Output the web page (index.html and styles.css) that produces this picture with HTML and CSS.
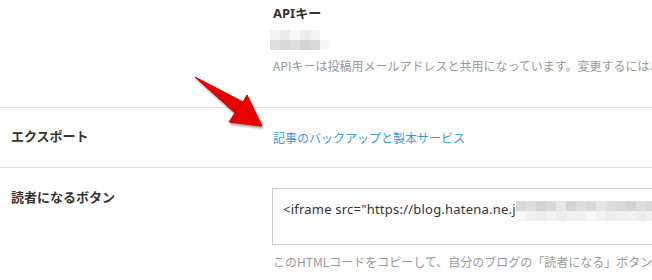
FILE: index.html
```html
<!DOCTYPE html>
<html lang="ja">

<head>
  <meta charset="UTF-8">
  <meta name="viewport" content="width=device-width, initial-scale=1.0">
  <title>詳細設定</title>
  <link rel="stylesheet" href="styles.css">
</head>

<body>
  <div class="settings">
    <div class="settings__row settings__row--api">
      <div class="settings__label"></div>
      <div class="settings__body">
        <h4 class="settings__title">APIキー</h4>
        <div class="mosaic mosaic--key">
          <span class="m1"></span><span class="m2"></span><span class="m0"></span><span class="m2"></span><span class="m1"></span><span class="blank"></span>
          <span class="m4"></span><span class="m5"></span><span class="m4"></span><span class="m6"></span><span class="m5"></span><span class="m0"></span>
        </div>
        <p class="settings__note">APIキーは投稿用メールアドレスと共用になっています。変更するには、</p>
      </div>
    </div>

    <div class="settings__row settings__row--export">
      <div class="settings__label">エクスポート</div>
      <div class="settings__body">
        <a class="settings__link" href="#">記事のバックアップと製本サービス</a>
      </div>
    </div>

    <div class="settings__row settings__row--button">
      <div class="settings__label">読者になるボタン</div>
      <div class="settings__body">
        <div class="code-box">
          <span class="code-box__text">&lt;iframe src="https://blog.hatena.ne.j</span><span class="mosaic mosaic--code">
            <span class="m5"></span><span class="m4"></span><span class="m6"></span><span class="m5"></span><span class="m3"></span><span class="m6"></span><span class="m4"></span><span class="m5"></span><span class="m3"></span><span class="m4"></span><span class="m5"></span><span class="m6"></span><span class="m4"></span><span class="m5"></span><span class="m6"></span>
            <span class="m0"></span><span class="m1"></span><span class="m2"></span><span class="m1"></span><span class="m2"></span><span class="m1"></span><span class="m1"></span><span class="m0"></span><span class="m1"></span><span class="m2"></span><span class="m1"></span><span class="m1"></span><span class="m2"></span><span class="m1"></span><span class="m0"></span>
          </span>
        </div>
        <p class="settings__note settings__note--code">このHTMLコードをコピーして、自分のブログの「読者になる」ボタンを</p>
      </div>
    </div>
  </div>

  <!-- 注目ポイントの矢印 -->
  <svg class="pointer" width="80" height="60" viewBox="190 72 80 60">
    <path d="M195 77 L243 102 L247 95 L262 126 L229 122 L235 113 Z" fill="#e60000" stroke="#d00000" stroke-width="1" stroke-linejoin="round"/>
  </svg>
</body>

</html>
```

FILE: styles.css
```css
body {
  margin: 0;
  font-family: "Noto Sans", "Noto Sans CJK JP", sans-serif;
  color: #333;
  background: #fff;
}

.settings {
  width: 100%;
  overflow: hidden;
}

.settings__row {
  display: flex;
  border-bottom: 1px solid #dedede;
}

.settings__label {
  width: 262px;
  flex-shrink: 0;
  padding-left: 11px;
  font-family: "Noto Sans CJK JP", sans-serif;
  font-size: 13px;
  font-weight: bold;
  line-height: 20px;
}

.settings__body {
  flex: 1;
  min-width: 0;
  white-space: nowrap;
}

.settings__row--api .settings__body {
  padding: 3px 0 32px;
}

.settings__title {
  margin: 0;
  font-size: 13px;
  font-weight: bold;
  line-height: 20px;
  font-family: "Noto Sans", "Noto Sans CJK JP", sans-serif;
}

.settings__note {
  margin: 0;
  font-family: "Noto Sans CJK JP", sans-serif;
  font-size: 12px;
  line-height: 18px;
  color: #999;
}

.settings__row--api .settings__note {
  margin-top: 7px;
}

.settings__row--export .settings__label,
.settings__row--export .settings__body {
  padding-top: 18px;
  padding-bottom: 19px;
}

.settings__link {
  display: inline-block;
  font-family: "Noto Sans CJK JP", sans-serif;
  font-size: 12px;
  line-height: 20px;
  color: #3d9bd4;
  text-decoration: none;
}

.settings__row--button {
  border-bottom: none;
}

.settings__row--button .settings__label {
  padding-top: 19px;
}

.settings__row--button .settings__body {
  padding-top: 20px;
}

.code-box {
  width: 420px;
  height: 57px;
  box-sizing: border-box;
  margin-left: -1px;
  padding: 11px 10px 0;
  border: 1px solid #c8ced3;
  font-size: 13px;
  line-height: 18px;
  color: #333;
  display: flex;
  align-items: flex-start;
}

.code-box__text {
  letter-spacing: 0.22px;
}

.settings__note--code {
  margin-top: 8px;
}

/* ぼかし部分 */
.mosaic {
  display: grid;
  grid-auto-rows: 10px;
  flex-shrink: 0;
}

.mosaic--key {
  grid-template-columns: repeat(6, 10px);
  margin-top: 7px;
  margin-left: -3px;
}

.mosaic--code {
  grid-template-columns: repeat(15, 10px);
  margin-top: 1px;
}

.mosaic .blank { background: #fff; }
.mosaic .m0 { background: #f7f7f7; }
.mosaic .m1 { background: #f1f1f1; }
.mosaic .m2 { background: #ececec; }
.mosaic .m3 { background: #e6e6e6; }
.mosaic .m4 { background: #dedede; }
.mosaic .m5 { background: #d9d9d9; }
.mosaic .m6 { background: #d3d3d3; }

.pointer {
  position: absolute;
  left: 190px;
  top: 72px;
  filter: drop-shadow(1px 2px 1px rgba(90, 0, 0, 0.45));
}
```
